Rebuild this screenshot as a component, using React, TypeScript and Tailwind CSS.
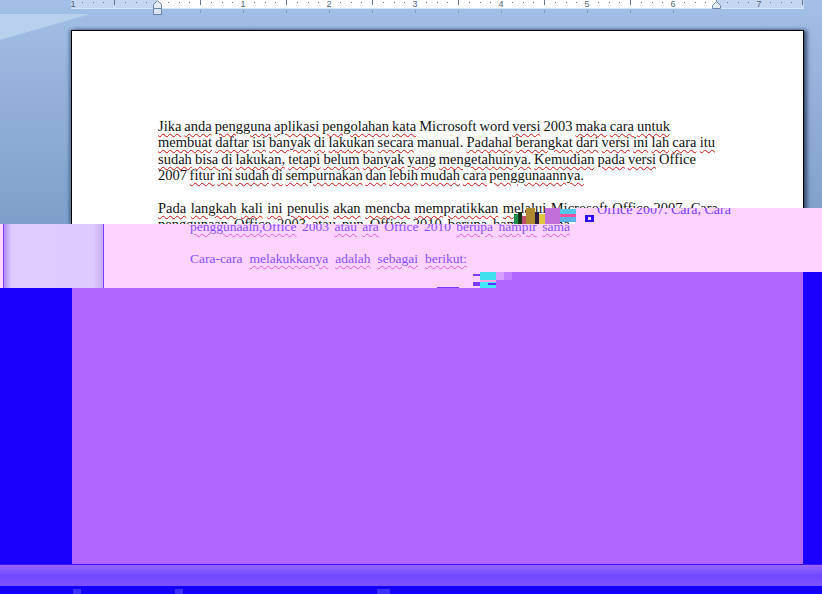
const serif = { fontFamily: '"Liberation Serif", "Times New Roman", serif' };

function Line({ words, width, purple }: { words: string; width: number; purple?: boolean }) {
  return (
    <div className="flex justify-between h-[16.4px] leading-[16.4px] whitespace-nowrap" style={{ width }}>
      {words.split(" ").map((w, i) => {
        const wavy = w.startsWith("~");
        return (
          <span
            key={i}
            className={
              wavy
                ? purple
                  ? "underline decoration-wavy decoration-[#e85ce8] decoration-1 underline-offset-2"
                  : "underline decoration-wavy decoration-[#d01010] decoration-1 underline-offset-2"
                : ""
            }
          >
            {wavy ? w.slice(1) : w}
          </span>
        );
      })}
    </div>
  );
}

function Ruler() {
  const ticks: number[] = [];
  for (let x = 71; x <= 804; x += 10.75) ticks.push(x);
  const nums = [
    ["1", 243],
    ["2", 329],
    ["3", 415],
    ["4", 501],
    ["5", 587],
    ["6", 673],
    ["7", 759],
  ] as const;
  return (
    <svg width="822" height="16" className="block">
      <rect x="71" y="0" width="733" height="8" fill="#c5d6f0" />
      <rect x="157" y="0" width="559" height="8" fill="#ffffff" />
      <rect x="71" y="8" width="733" height="1" fill="#d8e4f5" />
      {ticks.map((x, i) => {
        const k = Math.round((x - 157) / 10.75);
        if (k % 8 === 0) return null;
        return k % 4 === 0 ? (
          <rect key={i} x={Math.round(x)} y="0" width="1" height="5" fill="#66758c" />
        ) : (
          <rect key={i} x={Math.round(x)} y="2" width="1" height="1" fill="#66758c" />
        );
      })}
      {ticks.map((x, i) => {
        const k = Math.round((x - 157) / 10.75);
        return k > 0 && k % 4 === 0 && x < 716 ? (
          <rect key={"b" + i} x={Math.round(x)} y="10" width="1" height="3" fill="#7f9cc4" />
        ) : null;
      })}
      {nums.map(([n, x]) => (
        <text key={n} x={x} y="6.5" textAnchor="middle" fontSize="9" fill="#55657c" fontFamily="Liberation Sans, sans-serif">
          {n}
        </text>
      ))}
      <text x="73" y="6.5" textAnchor="middle" fontSize="9" fill="#55657c" fontFamily="Liberation Sans, sans-serif">1</text>
      <path d="M157.5 0.5 L161.5 4.5 V8.5 H153.5 V4.5 Z" fill="#e6ecf5" stroke="#6d86a8" />
      <rect x="153.5" y="8.5" width="8" height="6" fill="#d9e3f2" stroke="#6d86a8" />
      <path d="M716.5 1.5 L720.5 5.5 V8.5 H712.5 V5.5 Z" fill="#e6ecf5" stroke="#6d86a8" />
    </svg>
  );
}

function Noise({ cells }: { cells: [number, number, number, number, string][] }) {
  return (
    <>
      {cells.map(([x, y, w, h, c], i) => (
        <div key={i} className="absolute" style={{ left: x, top: y, width: w, height: h, background: c }} />
      ))}
    </>
  );
}

export default function App() {
  return (
    <div className="relative w-[822px] h-[594px] overflow-hidden text-[14.5px] text-[#111]" style={serif}>
      {/* upper part, real colours */}
      <div className="relative h-[224px] overflow-hidden bg-gradient-to-b from-[#a2bfe7] to-[#7f9ec9]">
        <div
          className="absolute left-0 top-[14px] w-[90px] h-[26px] bg-[#b8cfee]"
          style={{ clipPath: "polygon(0 0, 100% 0, 0 100%)" }}
        />
        <div className="relative h-[30px]">
          <Ruler />
        </div>
        <div className="relative ml-[71px] w-[733px] h-[194px] bg-white border border-black border-b-0 pl-[86px] pt-[87px] shadow-[-2px_0_3px_rgba(30,50,90,0.45),3px_0_4px_rgba(20,35,70,0.7)]">
          <Line width={512} words="~Jika ~anda ~pengguna ~aplikasi ~pengolahan ~kata Microsoft word ~versi 2003 ~maka ~cara ~untuk" />
          <Line width={557} words="~membuat ~daftar ~isi ~banyak ~di ~lakukan ~secara manual. ~Padahal ~berangkat ~dari ~versi ~ini ~lah ~cara ~itu" />
          <Line width={538} words="~sudah ~bisa ~di ~lakukan, ~tetapi ~belum ~banyak ~yang ~mengetahuinya. ~Kemudian ~pada ~versi Office" />
          <Line width={426} words="2007 ~fitur ~ini ~sudah ~di ~sempurnakan ~dan ~lebih ~mudah ~cara ~penggunaannya." />
          <div className="h-[16.4px]" />
          <Line width={560} words="~Pada ~langkah ~kali ~ini ~penulis ~akan ~mencba ~mempratikkan ~melalui Microsoft Office 2007. Cara" />
          <Line width={412} words="~penggunaan Office 2003 ~atau ~pun Office 2010 ~berupa ~hampir ~sama" />
        </div>
      </div>

      {/* corrupted band */}
      <div className="flex h-[64px] bg-[#fdd3ff]">
        <div className="w-[3px]" />
        <div className="w-[101px] border-x border-[#7a3cff] bg-[linear-gradient(to_right,#b48cff,#e0ccff_8%,#dccaff_90%,#c8aaff)]" />
        <div className="flex-1 pl-[86px] text-[#8a50ff] text-[13.5px]">
          <div className="-mt-[5px] h-[14px] overflow-visible">
            <Line purple width={380} words="~penggunaaln,Office 2003 ~atau ~ara Office 2010 ~berupa ~hampir ~sama" />
          </div>
          <div className="h-[18px]" />
          <Line purple width={277} words="Cara-cara ~melakukkanya ~adalah ~sebagai ~berikut:" />
        </div>
      </div>

      {/* lower part */}
      <div className="h-[276px] bg-[#1a00ff] pl-[72px]">
        <div className="h-full w-[731px] bg-[#b066ff]" />
      </div>
      <div className="h-[22px] border-t border-[#3a14ee] bg-gradient-to-b from-[#9a66ff] via-[#6f48ff] to-[#7d52ff]" />
      <div className="h-[8px] bg-[#1400ff]" />

      {/* band spill above the page edge */}
      <div className="absolute left-[575px] right-0 top-[208px] h-[16px] bg-[#fdd3ff] overflow-hidden">
        <div className="absolute left-[22px] -top-[6px] whitespace-nowrap text-[#7a3cff] text-[14px] leading-[16.4px]">
          Office 2007. Cara, Cara
        </div>
      </div>
      {/* band ends sooner on the right */}
      <div className="absolute left-[496px] right-0 top-[272px] h-[16px] bg-[#b066ff]">
        <div className="absolute right-0 top-0 w-[19px] h-full bg-[#1a00ff]" />
      </div>
      <Noise
        cells={[
          [514, 214, 4, 10, "#1f8f4a"],
          [518, 212, 4, 12, "#18331c"],
          [522, 216, 4, 8, "#c05070"],
          [526, 208, 9, 16, "#b08a30"],
          [535, 212, 4, 12, "#2a1a40"],
          [539, 214, 6, 10, "#e0c840"],
          [545, 208, 15, 16, "#c070d8"],
          [560, 209, 16, 5, "#50c8e8"],
          [560, 214, 16, 3, "#f050a0"],
          [560, 217, 16, 5, "#60b0f0"],
          [585, 215, 9, 7, "#2a10ff"],
          [588, 217, 3, 3, "#fdd3ff"],
          [473, 274, 7, 2, "#7a3cff"],
          [473, 282, 7, 4, "#7a3cff"],
          [480, 272, 16, 8, "#40e0f0"],
          [480, 280, 16, 2, "#f8a0e0"],
          [480, 282, 16, 6, "#40e8f8"],
          [488, 283, 8, 2, "#5a30ff"],
          [496, 272, 8, 8, "#d69cff"],
          [504, 272, 8, 8, "#c080ff"],
          [437, 287, 22, 1, "#7a3cff"],
          [73, 589, 8, 5, "#3a30ff"],
          [175, 589, 8, 5, "#3a30ff"],
          [377, 589, 13, 5, "#3a30ff"],
        ]}
      />
    </div>
  );
}
